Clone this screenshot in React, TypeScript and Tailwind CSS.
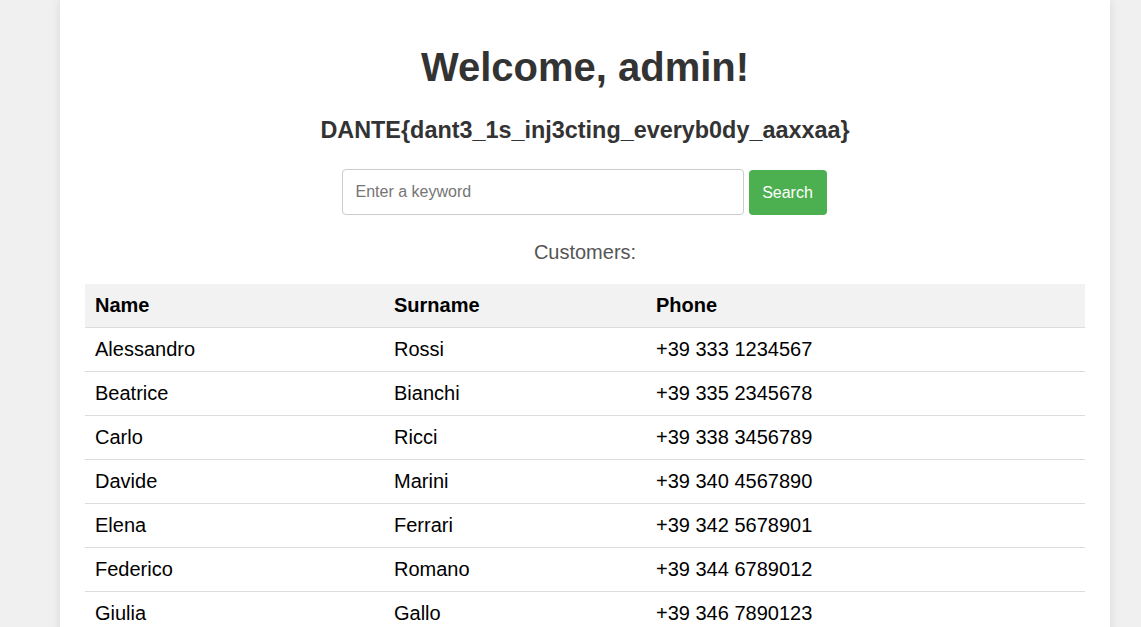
const customers = [
  { name: 'Alessandro', surname: 'Rossi', phone: '+39 333 1234567' },
  { name: 'Beatrice', surname: 'Bianchi', phone: '+39 335 2345678' },
  { name: 'Carlo', surname: 'Ricci', phone: '+39 338 3456789' },
  { name: 'Davide', surname: 'Marini', phone: '+39 340 4567890' },
  { name: 'Elena', surname: 'Ferrari', phone: '+39 342 5678901' },
  { name: 'Federico', surname: 'Romano', phone: '+39 344 6789012' },
  { name: 'Giulia', surname: 'Gallo', phone: '+39 346 7890123' },
  { name: 'Lorenzo', surname: 'Costa', phone: '+39 347 8901234' },
];

export default function App() {
  return (
    <div className="min-h-screen bg-[#f0f0f0] font-['Liberation_Sans',Arial,sans-serif]">
      <div className="ml-[60px] w-[1050px] bg-white px-[25px] pt-[44px] pb-[25px] shadow-[0_0_10px_rgba(0,0,0,0.1)]">
        {/* Heading */}
        <h1 className="text-center text-[40px] leading-[46px] font-bold text-[#333]">Welcome, admin!</h1>
        <h2 className="mt-[27px] text-center text-[23.4px] leading-[27px] font-bold text-[#333]">
          DANTE{'{'}dant3_1s_inj3cting_everyb0dy_aaxxaa{'}'}
        </h2>

        {/* Search */}
        <form className="mt-[25px] flex justify-center gap-[5px] pr-[2px]" onSubmit={(e) => e.preventDefault()}>
          <input
            type="text"
            placeholder="Enter a keyword"
            className="h-[46px] w-[402px] rounded-[4px] border border-[#ccc] px-[13px] text-[16px] text-[#333] placeholder:text-[#757575] outline-none"
          />
          <button type="submit" className="mt-[1px] h-[45px] w-[78px] rounded-[4px] bg-[#4CAF50] text-[16px] text-white">
            Search
          </button>
        </form>

        <p className="mt-[26px] text-center text-[20px] leading-[23px] text-[#555]">Customers:</p>

        {/* Customers table */}
        <table className="mt-[20px] w-full border-collapse text-[20px] text-black">
          <thead>
            <tr className="bg-[#f2f2f2] border-b border-[#ddd]">
              <th className="w-[299px] p-[10px] text-left leading-[23px] font-bold">Name</th>
              <th className="w-[262px] p-[10px] text-left leading-[23px] font-bold">Surname</th>
              <th className="p-[10px] text-left leading-[23px] font-bold">Phone</th>
            </tr>
          </thead>
          <tbody>
            {customers.map((c) => (
              <tr key={c.phone} className="border-b border-[#ddd]">
                <td className="p-[10px] leading-[23px]">{c.name}</td>
                <td className="p-[10px] leading-[23px]">{c.surname}</td>
                <td className="p-[10px] leading-[23px]">{c.phone}</td>
              </tr>
            ))}
          </tbody>
        </table>
      </div>
    </div>
  );
}
